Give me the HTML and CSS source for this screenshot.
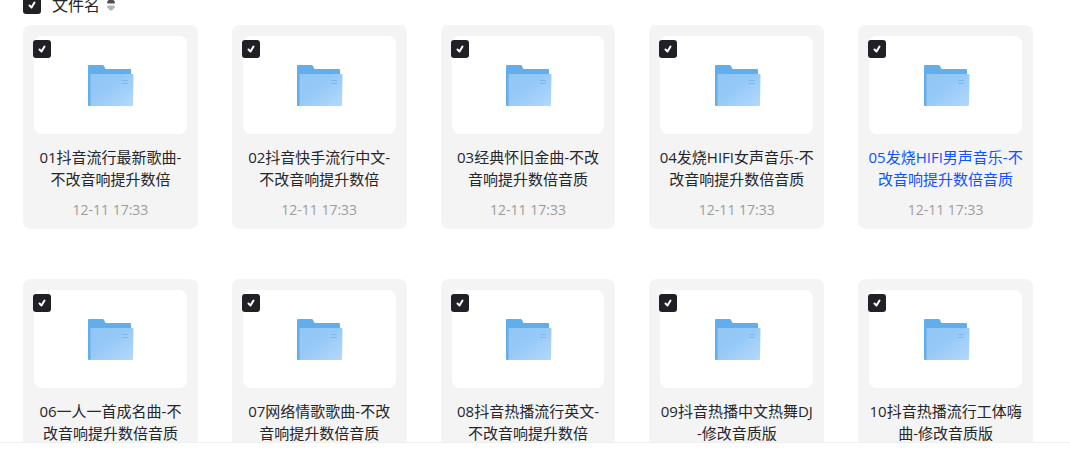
FILE: index.html
```html
<!DOCTYPE html>
<html lang="zh-CN">
<head>
    <meta charset="UTF-8">
    <meta name="viewport" content="width=device-width, initial-scale=1.0">
    <title>文件列表</title>
    <link rel="stylesheet" href="styles.css">
</head>
<body>
    <svg width="0" height="0" class="sprite" aria-hidden="true">
        <defs>
            <linearGradient id="front" x1="0" y1="0" x2="1" y2="1">
                <stop offset="0" stop-color="#92c6f5"/>
                <stop offset="0.4" stop-color="#94c8f6"/>
                <stop offset="1" stop-color="#b3d9fd"/>
            </linearGradient>
        </defs>
        <symbol id="folder" viewBox="-2 -1 48 42">
            <path fill="#62aeea" d="M1 0h13.500q1 0 1.500 1l1.500 3H42q1 0 1 1v36H1q-1 0-1-1V1q0-1 1-1z"/>
            <path fill="url(#front)" d="M3 9h41.700q.8 0 .8 1L45 40q0 1-1 1H2.500V9.500z"/>
            <path stroke="#79b9f0" d="M34 15.500h6M34 18.500h6"/>
        </symbol>
    </svg>
    <main class="file-list">
        <div class="list-header">
            <input type="checkbox" class="check" id="checkAll" checked>
            <label for="checkAll">文件名</label>
            <button type="button" class="sort-btn" aria-label="排序">
                <svg width="8" height="14" viewBox="0 0 8 14">
                    <path fill="#505052" d="M3 0h2l3 4q0 1.500-1.500 1.500h-5Q0 5.500 0 4z"/>
                    <path fill="#b4b4b5" d="M1.500 7.500h5Q8 7.500 8 9l-3 3.500H3L0 9q0-1.500 1.500-1.500z"/>
                </svg>
            </button>
        </div>
        <div class="grid" id="grid"></div>
    </main>
    <footer class="footer"></footer>

    <script>
        const files = [
            ['01抖音流行最新歌曲-', '不改音响提升数倍'],
            ['02抖音快手流行中文-', '不改音响提升数倍'],
            ['03经典怀旧金曲-不改', '音响提升数倍音质'],
            ['04发烧HIFI女声音乐-不', '改音响提升数倍音质'],
            ['05发烧HIFI男声音乐-不', '改音响提升数倍音质'],
            ['06一人一首成名曲-不', '改音响提升数倍音质'],
            ['07网络情歌歌曲-不改', '音响提升数倍音质'],
            ['08抖音热播流行英文-', '不改音响提升数倍'],
            ['09抖音热播中文热舞DJ', '-修改音质版'],
            ['10抖音热播流行工体嗨', '曲-修改音质版']
        ];
        const activeIndex = 4;

        document.getElementById('grid').innerHTML = files.map((name, i) => `
            <div class="card${i === activeIndex ? ' active' : ''}">
                <div class="thumb">
                    <input type="checkbox" class="check card-check" aria-labelledby="name${i}" checked>
                    <svg class="folder" width="48" height="42"><use href="#folder"/></svg>
                </div>
                <a href="#" class="name" id="name${i}">${name[0]}<br>${name[1]}</a>
                <time class="date">12-11 17:33</time>
            </div>`).join('');
    </script>
</body>
</html>
```

FILE: styles.css
```css
* {
    box-sizing: border-box;
}
body {
    margin: 0;
    height: 100vh;
    display: flex;
    flex-direction: column;
    background-color: #ffffff;
    color: #25262b;
    font-family: "Open Sans", "Noto Sans CJK SC", sans-serif;
}
.sprite {
    position: absolute;
}
.file-list {
    flex: 1;
    min-height: 0;
    overflow: hidden;
    padding: 0 37px 0 23px;
}
/* header is partly scrolled out of view */
.list-header {
    display: flex;
    align-items: center;
    height: 30px;
    margin-top: -10px;
    margin-bottom: 5px;
    font-size: 16px;
}
.list-header label {
    margin-left: 11px;
    padding-bottom: 2px;
}
.sort-btn {
    display: flex;
    margin-left: 7px;
    padding: 0;
    border: none;
    background: none;
    cursor: pointer;
}
.check {
    appearance: none;
    flex: none;
    width: 18px;
    height: 18px;
    margin: 0;
    border-radius: 3px;
    background-color: #ffffff;
    border: 1px solid #d4d7de;
    cursor: pointer;
}
.check:checked {
    border: none;
    background: #202127 url("data:image/svg+xml,%3Csvg xmlns='http://www.w3.org/2000/svg' viewBox='0 0 18 18'%3E%3Cpath d='M6.500 9.500l2 2 3-5' fill='none' stroke='white' stroke-width='2' stroke-linecap='round' stroke-linejoin='round'/%3E%3C/svg%3E");
}
.grid {
    display: grid;
    grid-template-columns: repeat(5, minmax(0, 1fr));
    gap: 50px 34px;
}
.card {
    display: flex;
    flex-direction: column;
    align-items: center;
    padding: 11px 11px 8px;
    border-radius: 8px;
    background-color: #f4f4f4;
}
.thumb {
    position: relative;
    display: flex;
    align-items: center;
    justify-content: center;
    width: 100%;
    height: 98px;
    border-radius: 8px;
    background-color: #ffffff;
}
.card-check {
    position: absolute;
    top: 4px;
    left: -1px;
}
.name {
    margin-top: 12px;
    font-size: 15px;
    line-height: 22px;
    color: #25262b;
    text-align: center;
    text-decoration: none;
    white-space: nowrap;
}
.active .name {
    color: #0d53ff;
}
.date {
    margin-top: 9px;
    font-size: 14px;
    line-height: 22px;
    color: #9c9c9d;
}
.footer {
    height: 13px;
    border-top: 1px solid #f0f0f0;
}
```
